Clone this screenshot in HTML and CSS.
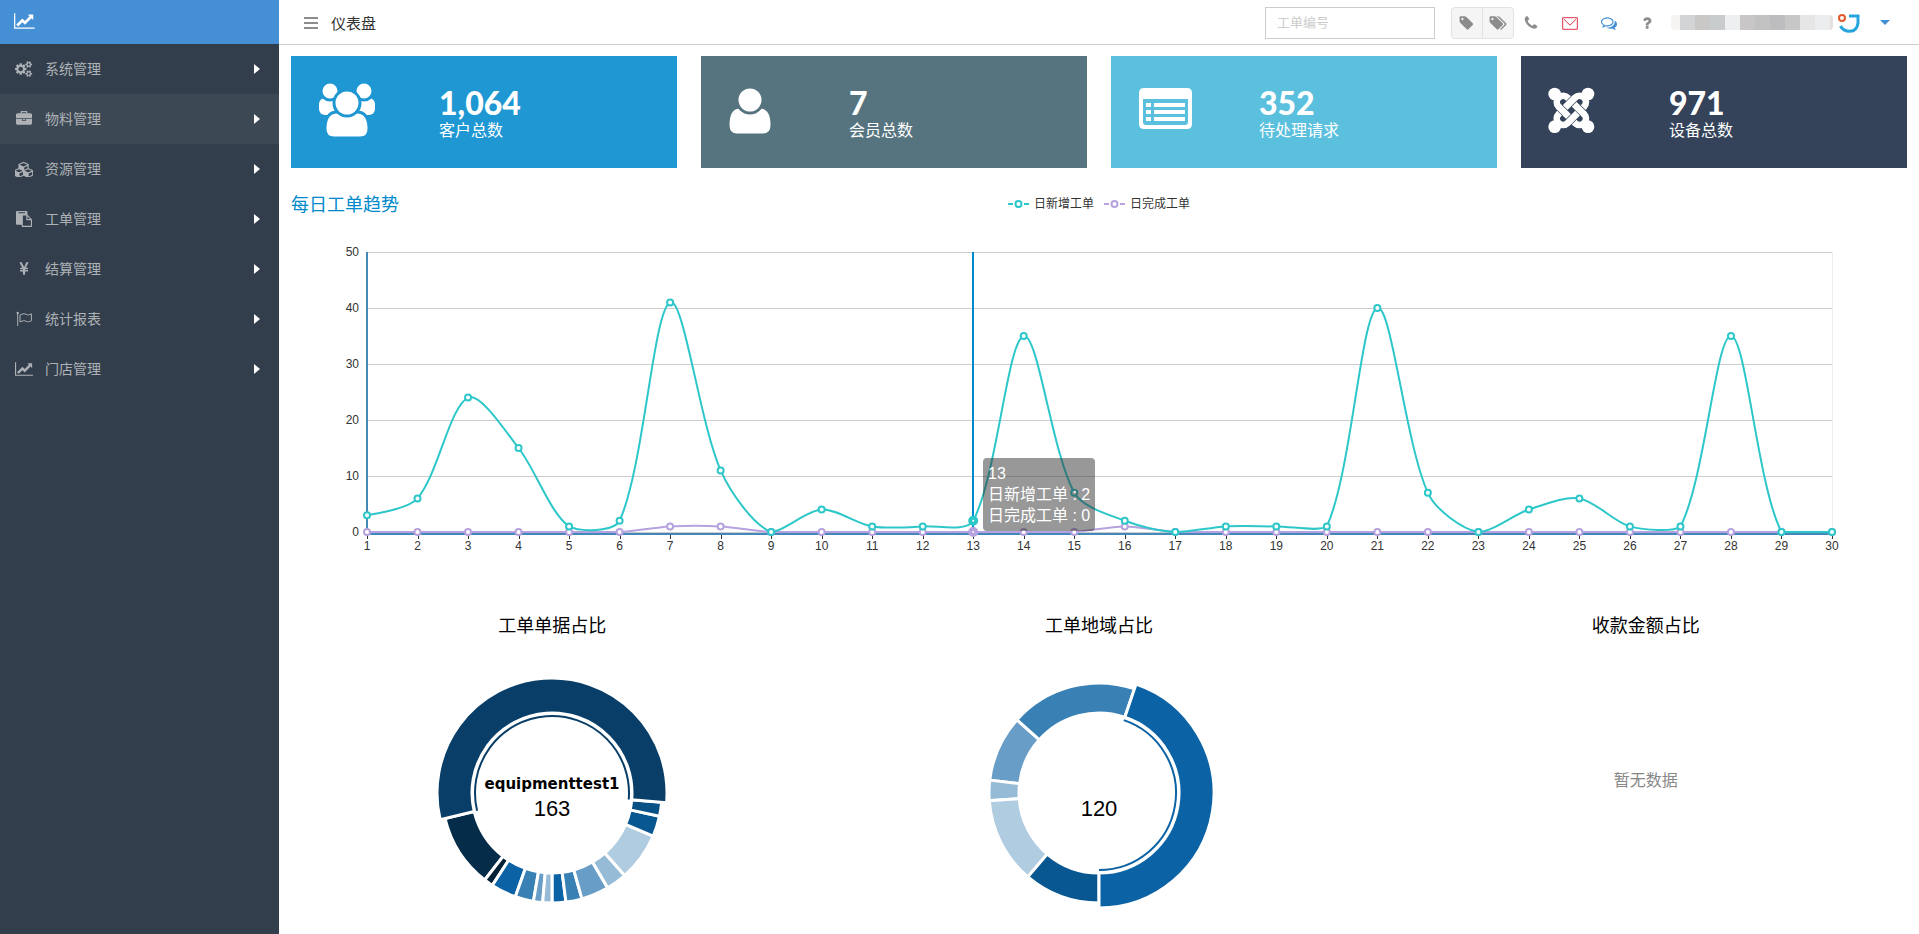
FILE: index.html
```html
<!DOCTYPE html>
<html lang="zh-CN">
<head>
<meta charset="utf-8">
<title>仪表盘</title>
<link rel="stylesheet" href="styles.css">
</head>
<body>
<div class="layout">
  <aside class="sidebar">
    <a class="brand" href="#" aria-label="首页"><svg class="brand-icon" viewBox="0 0 2048 1792"><path d="M2048 1536v128h-2048v-1536h128v1408h1920zM1920 288v435q0 21-19.500 29.500t-35.500-7.500l-121-121-633 633q-10 10-23 10t-23-10l-233-233-416 416-192-192 585-585q10-10 23-10t23 10l233 233 464-464-121-121q-16-16-7.500-35.500t29.500-19.500h435q14 0 23 9t9 23z"/></svg></a>
    <nav class="menu">
      <a class="menu-item" href="#"><span class="menu-icon"><svg viewBox="0 0 1920 1792"><path d="M896 896q0-106-75-181t-181-75-181 75-75 181 75 181 181 75 181-75 75-181zm768 512q0-52-38-90t-90-38-90 38-38 90q0 53 37.500 90.500t90.500 37.500 90.500-37.500 37.500-90.500zm0-1024q0-52-38-90t-90-38-90 38-38 90q0 53 37.500 90.500t90.500 37.500 90.500-37.500 37.500-90.500zm-384 421v185q0 10-7 19.500t-16 10.500l-155 24q-11 35-32 76 34 48 90 115 7 11 7 20 0 12-7 19-23 30-82.500 89.500t-78.500 59.500q-11 0-21-7l-115-90q-37 19-77 31-11 108-23 155-7 24-30 24h-186q-11 0-20-7.500t-10-17.500l-23-153q-34-10-75-31l-118 89q-7 7-20 7-11 0-21-8-144-133-144-160 0-9 7-19 10-14 41-53t47-61q-23-44-35-82l-152-24q-10-1-17-9.500t-7-19.500v-185q0-10 7-19.500t16-10.500l155-24q11-35 32-76-34-48-90-115-7-11-7-20 0-12 7-20 22-30 82-89t79-59q11 0 21 7l115 90q34-18 77-32 11-108 23-154 7-24 30-24h186q11 0 20 7.500t10 17.500l23 153q34 10 75 31l118-89q8-7 20-7 11 0 21 8 144 133 144 160 0 8-7 19-12 16-42 54t-45 60q23 48 34 82l152 23q10 2 17 10.500t7 19.500zm640 533v140q0 16-149 31-12 27-30 52 51 113 51 138 0 4-4 7-122 71-124 71-8 0-46-47t-52-68q-20 2-30 2t-30-2q-14 21-52 68t-46 47q-2 0-124-71-4-3-4-7 0-25 51-138-18-25-30-52-149-15-149-31v-140q0-16 149-31 13-29 30-52-51-113-51-138 0-4 4-7 4-2 35-20t59-34 30-16q8 0 46 46.500t52 67.500q20-2 30-2t30 2q51-71 92-112l6-2q4 0 124 70 4 3 4 7 0 25-51 138 17 23 30 52 149 15 149 31zm0-1024v140q0 16-149 31-12 27-30 52 51 113 51 138 0 4-4 7-122 71-124 71-8 0-46-47t-52-68q-20 2-30 2t-30-2q-14 21-52 68t-46 47q-2 0-124-71-4-3-4-7 0-25 51-138-18-25-30-52-149-15-149-31v-140q0-16 149-31 13-29 30-52-51-113-51-138 0-4 4-7 4-2 35-20t59-34 30-16q8 0 46 46.500t52 67.500q20-2 30-2t30 2q51-71 92-112l6-2q4 0 124 70 4 3 4 7 0 25-51 138 17 23 30 52 149 15 149 31z"/></svg></span><span class="menu-label">系统管理</span><span class="menu-arrow"></span></a>
      <a class="menu-item menu-item-active" href="#"><span class="menu-icon"><svg viewBox="0 0 1792 1792"><path d="M640 256h512v-128h-512v128zm1152 640v480q0 66-47 113t-113 47h-1472q-66 0-113-47t-47-113v-480h672v160q0 26 19 45t45 19h320q26 0 45-19t19-45v-160h672zm-768 0v128h-256v-128h256zm768-480v384h-1792v-384q0-66 47-113t113-47h352v-160q0-40 28-68t68-28h576q40 0 68 28t28 68v160h352q66 0 113 47t47 113z"/></svg></span><span class="menu-label">物料管理</span><span class="menu-arrow"></span></a>
      <a class="menu-item" href="#"><span class="menu-icon"><svg viewBox="0 0 2112 1792"><path d="M512 1728l384-192v-314l-384 164v342zm-64-454l404-173-404-173-404 173zm1088 454l384-192v-314l-384 164v342zm-64-454l404-173-404-173-404 173zm-448-293l384-165v-266l-384 164v267zm-64-379l441-189-441-189-441 189zm1088 518v416q0 36-19 67t-52 47l-448 224q-25 14-57 14t-57-14l-448-224q-4-2-7-4-2 2-7 4l-448 224q-25 14-57 14t-57-14l-448-224q-33-16-52-47t-19-67v-416q0-38 21.500-70t56.500-48l434-186v-400q0-38 21.500-70t56.500-48l448-192q23-10 50-10t50 10l448 192q35 16 56.500 48t21.500 70v400l434 186q36 16 57 48t21 70z"/></svg></span><span class="menu-label">资源管理</span><span class="menu-arrow"></span></a>
      <a class="menu-item" href="#"><span class="menu-icon"><svg viewBox="0 0 1792 1792"><path d="M768 1664h896v-640h-416q-40 0-68-28t-28-68v-416h-384v1152zm256-1440v-64q0-13-9.500-22.500t-22.500-9.500h-704q-13 0-22.500 9.500t-9.500 22.500v64q0 13 9.500 22.500t22.500 9.500h704q13 0 22.500-9.500t9.500-22.500zm256 672h299l-299-299v299zm512 128v672q0 40-28 68t-68 28h-960q-40 0-68-28t-28-68v-160h-544q-40 0-68-28t-28-68v-1344q0-40 28-68t68-28h1088q40 0 68 28t28 68v328q21 13 36 28l408 408q28 28 48 76t20 88z"/></svg></span><span class="menu-label">工单管理</span><span class="menu-arrow"></span></a>
      <a class="menu-item" href="#"><span class="menu-icon"><svg viewBox="0 0 1792 1792"><path d="M985.500 1536h-172q-13 0-22.500-9t-9.500-23v-330h-288q-13 0-22.500-9t-9.500-23v-103q0-13 9.500-22.500t22.500-9.500h288v-85h-288q-13 0-22.500-9t-9.500-23v-104q0-13 9.500-22.500t22.500-9.500h214l-321-578q-8-16 0-32 10-16 28-16h194q19 0 29 18l215 425q19 38 56 125 10-24 30.500-68t27.500-61l191-420q8-19 29-19h191q17 0 27 16 9 14 1 31l-313 579h215q13 0 22.500 9.500t9.500 22.500v104q0 14-9.500 23t-22.500 9h-290v85h290q13 0 22.500 9.500t9.500 22.500v103q0 14-9.500 23t-22.500 9h-290v330q0 13-9.500 22.500t-22.500 9.500z"/></svg></span><span class="menu-label">结算管理</span><span class="menu-arrow"></span></a>
      <a class="menu-item" href="#"><span class="menu-icon"><svg viewBox="0 0 16 16"><circle cx="1.700" cy="2" r="1.200"/><path d="M1.200 2h1v13h-1z"/><path class="flag-cloth" d="M4 4.100c3-1.700 4.500-1.600 6.200-.7 1.600.8 3 .6 5.200-.6v6.900c-2.200 1.200-3.600 1.400-5.200.6C8.500 9.500 7 9.400 4 11z"/></svg></span><span class="menu-label">统计报表</span><span class="menu-arrow"></span></a>
      <a class="menu-item" href="#"><span class="menu-icon"><svg viewBox="0 0 2048 1792"><path d="M2048 1536v128h-2048v-1536h128v1408h1920zM1920 288v435q0 21-19.500 29.500t-35.500-7.500l-121-121-633 633q-10 10-23 10t-23-10l-233-233-416 416-192-192 585-585q10-10 23-10t23 10l233 233 464-464-121-121q-16-16-7.500-35.500t29.500-19.500h435q14 0 23 9t9 23z"/></svg></span><span class="menu-label">门店管理</span><span class="menu-arrow"></span></a>
    </nav>
  </aside>

  <div class="page">
    <header class="topbar">
      <button class="toggle" type="button" aria-label="切换菜单"><svg viewBox="0 0 14 12"><path d="M0 0h14v2H0zM0 5h14v2H0zM0 10h14v2H0z"/></svg></button>
      <h1 class="page-title">仪表盘</h1>
      <input class="search" type="text" placeholder="工单编号" aria-label="工单编号">
      <div class="tag-group">
        <button type="button" aria-label="标签"><svg viewBox="64 0 1792 1792"><path d="M576 448q0-53-37.500-90.500t-90.500-37.500-90.500 37.500-37.500 90.500 37.500 90.500 90.500 37.500 90.500-37.500 37.500-90.500zm1067 576q0 53-37 90l-491 492q-39 37-91 37-53 0-90-37l-715-716q-38-37-64.500-101t-26.500-117v-416q0-52 38-90t90-38h416q53 0 117 26.500t102 64.500l715 714q37 39 37 91z"/></svg></button>
        <button type="button" aria-label="全部标签"><svg viewBox="64 0 2048 1792"><path d="M576 448q0-53-37.500-90.500t-90.500-37.500-90.500 37.500-37.500 90.500 37.500 90.500 90.500 37.500 90.500-37.500 37.500-90.500zm1067 576q0 53-37 90l-491 492q-39 37-91 37-53 0-90-37l-715-716q-38-37-64.500-101t-26.500-117v-416q0-52 38-90t90-38h416q53 0 117 26.500t102 64.500l715 714q37 39 37 91zm384 0q0 53-37 90l-491 492q-39 37-91 37-36 0-59-14t-53-45l470-470q37-37 37-90 0-52-37-91l-715-714q-38-38-102-64.500t-117-26.500h224q53 0 117 26.500t102 64.500l715 714q37 39 37 91z"/></svg></button>
      </div>
      <div class="actions">
        <button type="button" aria-label="电话"><svg viewBox="0 0 1792 1792"><path d="M1600 1240q0 27-10 70.500t-21 68.500q-21 50-122 106-94 51-186 51-27 0-52.500-3.500t-57.500-12.500-47.500-14.500-55.500-20.500-49-18q-98-35-175-83-128-79-264.500-215.500t-215.500-264.500q-48-77-83-175-3-9-18-49t-20.500-55.500-14.500-47.500-12.500-57.500-3.500-52.500q0-92 51-186 56-101 106-122 25-11 68.500-21t70.500-10q14 0 21 3 18 6 53 76 11 19 30 54t35 63.500 31 53.500q3 4 17.500 25t21.500 35.500 7 28.500q0 20-28.500 50t-62 55-62 53-28.500 46q0 9 5 22.500t8.500 20.500 14 24 11.500 19q76 137 174 235t235 174q2 1 19 11.500t24 14 20.500 8.500 22.500 5q18 0 46-28.500t53-62 55-62 50-28.500q14 0 28.500 7t35.500 21.500 25 17.500q25 15 53.500 31t63.500 35 54 30q70 35 76 53 3 7 3 21z"/></svg></button>
        <button class="mail" type="button" aria-label="邮件"><svg viewBox="0 0 16 16"><path d="M.7 2.700h14.600v11.600H.7zM2 4.300l6 5.900 6-5.900"/></svg></button>
        <button class="chat" type="button" aria-label="消息"><svg viewBox="0 0 1792 1792"><path d="M704 384q-153 0-286 52t-211.500 141-78.500 191q0 82 53 158t149 132l97 56-35 84q34-20 62-39l44-31 53 10q78 14 153 14 153 0 286-52t211.500-141 78.500-191-78.500-191-211.500-141-286-52zm0-128q191 0 353.500 68.500t256.500 186.500 94 257-94 257-256.500 186.500-353.500 68.500q-86 0-176-16-124 88-278 128-36 9-86 16h-3q-11 0-20.500-8t-11.500-21q-1-3-1-6.500t.5-6.500 2-6l2.500-5 3.500-5.500 4-5 4.500-5 4-4.500q5-6 23-25t26-29.500 22.500-29 25-38.500 20.500-44q-124-72-195-177t-71-224q0-139 94-257t256.500-186.500 353.500-68.500zm822 1169q10 24 20.500 44t25 38.500 22.500 29 26 29.500 23 25q1 1 4 4.500t4.500 5 4 5 3.500 5.500l2.500 5 2 6 .5 6.500-1 6.500q-3 14-13 22t-22 7q-50-7-86-16-154-40-278-128-90 16-176 16-271 0-472-132 58 4 88 4 161 0 309-45t264-129q125-92 192-212t67-254q0-77-23-152 129 71 204 178t75 230q0 120-71 224.500t-195 176.500z"/></svg></button>
        <button type="button" aria-label="帮助"><svg viewBox="128 0 1792 1792"><path d="M1088 1256v240q0 16-12 28t-28 12h-240q-16 0-28-12t-12-28v-240q0-16 12-28t28-12h240q16 0 28 12t12 28zm316-600q0 54-15.500 101t-35 76.500-55 59.500-57.500 43.500-61 35.500q-41 23-68.500 65t-27.500 67q0 17-12 32.500t-28 15.500h-240q-15 0-25.500-18.500t-10.500-37.500v-45q0-83 65-156.500t143-108.500q59-27 84-56t25-76q0-42-46.500-74t-107.500-32q-65 0-108 29-35 25-107 115-13 16-31 16-12 0-25-8l-164-125q-13-10-15.500-25t5.500-28q160-266 464-266 80 0 161 31t146 83 106 127.500 41 158.500z"/></svg></button>
      </div>
      <button class="user" type="button" aria-label="用户菜单">
        <span class="user-name"></span>
        <svg class="user-logo" viewBox="0 0 22 20"><circle cx="4" cy="5" r="3" stroke="#e2592a"/><path d="M11 3h9v7q-1 8-8 8.300-7 0-9.500-5.300" stroke="#26a4de" stroke-width="3"/></svg>
        <span class="caret"></span>
      </button>
    </header>

    <main class="content">
      <section class="cards">
        <a class="card card-blue" href="#">
          <svg class="card-icon" viewBox="0 0 60 60"><rect x="1" y="18" width="23" height="17" rx="6"/><rect x="34" y="18" width="23" height="17" rx="6"/><g class="outlined"><circle cx="12" cy="11" r="9"/><circle cx="46" cy="11" r="9"/><path d="M18 32q-11 1-11 17 0 9 9 9h26q9 0 9-9 0-16-11-17z"/><circle cx="29" cy="23" r="13"/></g></svg>
          <span class="card-text"><strong>1,064</strong><span>客户总数</span></span>
        </a>
        <a class="card card-slate" href="#">
          <svg class="card-icon" viewBox="-1 0 60 60"><g class="outlined"><path d="M10 27q-11 1-11 18 0 10 9 10h26q9 0 9-10 0-17-11-18z"/><circle cx="21" cy="20" r="13"/></g></svg>
          <span class="card-text"><strong>7</strong><span>会员总数</span></span>
        </a>
        <a class="card card-sky" href="#">
          <svg class="card-icon" viewBox="-1 0 60 60"><path fill-rule="evenodd" d="M5 8h43q5 0 5 5v31q0 5-5 5H5q-5 0-5-5V13q0-5 5-5zM4 19v23q0 3 3 3h39q3 0 3-3V19z"/><path d="M7 23h5v4H7zM15 23h31v4H15zM7 30h5v4H7zM15 30h31v4H15zM7 37h5v4H7zM15 37h31v4H15z"/></svg>
          <span class="card-text"><strong>352</strong><span>待处理请求</span></span>
        </a>
        <a class="card card-navy" href="#">
          <svg class="card-icon" viewBox="24 6 180 180">
            <circle cx="44" cy="48" r="19"/><circle cx="144" cy="48" r="19"/><circle cx="44" cy="146" r="19"/><circle cx="144" cy="146" r="19"/>
            <g class="knot" transform="translate(94 97) rotate(45)">
              <rect class="band" x="-54" y="-19" width="108" height="38" rx="19"/>
              <path class="casing" d="M-19-33V33M19-33V33"/>
              <rect class="band" x="-19" y="-54" width="38" height="108" rx="19"/>
              <path class="casing" d="M5-19h28M-33 19h28"/>
              <path class="band" d="M3-19h32M-35 19h32"/>
            </g>
          </svg>
          <span class="card-text"><strong>971</strong><span>设备总数</span></span>
        </a>
      </section>

      <section class="trend">
        <div class="trend-head">
          <h2 class="trend-title">每日工单趋势</h2>
          <div class="legend">
            <button class="legend-item legend-new" type="button"><svg viewBox="0 0 21 10"><path d="M0 5h5M16 5h5"/><circle cx="10.500" cy="5" r="3"/></svg>日新增工单</button>
            <button class="legend-item legend-done" type="button"><svg viewBox="0 0 21 10"><path d="M0 5h5M16 5h5"/><circle cx="10.500" cy="5" r="3"/></svg>日完成工单</button>
          </div>
        </div>
        <div class="trend-plot">
          <svg id="trend" class="trend-svg" role="img" aria-label="每日工单趋势"></svg>
          <div id="tip" class="tooltip">13<br>日新增工单 : 2<br>日完成工单 : 0</div>
        </div>
      </section>

      <section class="donuts">
        <div class="donut-col"><h3>工单单据占比</h3><svg id="donut-type" class="donut" viewBox="-120 -120 240 240"></svg></div>
        <div class="donut-col"><h3>工单地域占比</h3><svg id="donut-area" class="donut" viewBox="-120 -120 240 240"></svg></div>
        <div class="donut-col"><h3>收款金额占比</h3><p class="empty">暂无数据</p></div>
      </section>
    </main>
  </div>
</div>
<script src="charts.js"></script>
</body>
</html>
```

FILE: styles.css
```css
* { box-sizing: border-box; }

body {
  margin: 0;
  background: #fff;
  color: #333;
  font-family: "Liberation Sans", "Noto Sans CJK SC", sans-serif;
  font-size: 14px;
}

button {
  margin: 0;
  padding: 0;
  border: 0;
  background: none;
  font: inherit;
  color: inherit;
  cursor: pointer;
}

a { color: inherit; text-decoration: none; }
h1, h2, h3, p { margin: 0; font-weight: 400; }
svg { display: block; fill: currentColor; }

.layout { display: flex; min-height: 100vh; }

/* sidebar */
.sidebar { flex: none; width: 279px; background: #323e4b; color: #aeb2b7; }
.brand {
  display: flex;
  align-items: center;
  height: 44px;
  padding: 0 14px 2px;
  background: #4590d5;
  color: #fff;
}
.brand-icon { height: 18px; }
.menu-item {
  display: flex;
  align-items: center;
  height: 50px;
  padding: 0 19px 0 14px;
  line-height: 20px;
}
.menu-item-active { background: #3d4855; }
.menu-icon { display: flex; justify-content: center; width: 20px; margin-right: 11px; }
.menu-icon svg { height: 16px; }
.flag-cloth { fill: none; stroke: currentColor; }
.menu-label { flex: 1; }
.menu-arrow { border: 5px solid transparent; border-left: 6px solid #fff; border-right: 0; }

/* top bar */
.page { flex: 1; min-width: 0; }
.topbar {
  display: flex;
  align-items: center;
  height: 45px;
  padding: 1px 29px 0 25px;
  border-bottom: 1px solid #ccc;
}
.toggle { color: #8c8c8c; }
.toggle svg { width: 14px; }
.page-title { flex: 1; margin-left: 13px; font-size: 15px; }
.search {
  width: 170px;
  height: 32px;
  margin-right: 16px;
  padding: 0 11px;
  border: 1px solid #ccc;
  font: inherit;
  font-size: 13px;
}
.search::placeholder { color: #ccc; }
.tag-group {
  display: flex;
  height: 32px;
  border: 1px solid #e2e2e2;
  border-radius: 4px;
  background: #f5f5f5;
  color: #8c8c8c;
}
.tag-group button { display: flex; align-items: center; justify-content: center; width: 30px; }
.tag-group button + button { width: 31px; border-left: 1px solid #e2e2e2; }
.tag-group svg { height: 16px; }
.actions { display: flex; gap: 5px; color: #8c8c8c; }
.actions button { display: flex; justify-content: center; width: 34px; }
.actions svg { height: 16px; }
.actions .mail { color: #e0334c; }
.mail svg { fill: none; stroke: currentColor; }
.actions .chat { color: #4590d5; }
.user { display: flex; align-items: center; margin-left: 6px; }
.user-name {
  width: 162px;
  height: 15px;
  margin-right: 5px;
  border-radius: 4px;
  background: linear-gradient(90deg, #f5f4f3 9px, #d3d4d6 9px 24px, #c9c8c6 24px 39px, #c8cccc 39px 54px, #edeff1 54px 69px, #c9c6c7 69px 84px, #c2c2c2 84px 99px, #bdbdbf 99px 114px, #c7c7c7 114px 129px, #e6e6e6 129px 144px, #ecedef 144px 159px, #e6e1e1 159px);
}
.user-logo { width: 22px; margin-right: 20px; fill: none; stroke-width: 2; }
.caret { border: 5px solid transparent; border-top-color: #4590d5; border-bottom: 0; }

/* content */
.content { padding: 11px 12px; }

.cards { display: grid; grid-template-columns: repeat(4, 1fr); gap: 24px; }
.card { display: flex; height: 112px; padding: 24px 27px; color: #fff; }
.card-icon { flex: none; width: 60px; height: 60px; overflow: visible; }
.outlined { stroke-width: 3; }
.card-blue { background: #1f97d2; }
.card-blue .outlined { stroke: #1f97d2; }
.card-slate { background: #56747f; }
.card-slate .outlined { stroke: #56747f; }
.card-sky { background: #5bc0de; }
.card-navy { background: #34435a; }
.knot { fill: none; }
.band { stroke: #fff; stroke-width: 20; }
.casing { stroke: #34435a; stroke-width: 24; }
.card-text { display: flex; flex-direction: column; margin: 6px 0 0 61px; font-size: 16px; line-height: 22px; }
.card-text strong { font-family: Lato, sans-serif; font-size: 32px; font-weight: 900; line-height: 34px; }

.trend { margin-top: 25px; }
.trend-head { display: grid; grid-template-columns: 1fr auto 1fr; align-items: center; height: 24px; }
.trend-title { color: #008acd; font-size: 18px; line-height: 24px; }
.legend { display: flex; gap: 10px; padding-bottom: 2px; }
.legend-item { display: flex; align-items: center; gap: 5px; font-size: 12px; line-height: 16px; }
.legend svg { width: 21px; fill: none; stroke-width: 2; }
.legend-new svg { stroke: #2ec7c9; }
.legend-done svg { stroke: #b6a2de; }

.trend-plot { position: relative; }
.trend-svg { width: 100%; height: 360px; overflow: visible; }
.trend-svg text { fill: #333; font-size: 12px; }
.grid-line { stroke: #ccc; }
.edge-line { stroke: #eee; }
.axis { fill: none; stroke: #4488bb; stroke-width: 2; }
.tick { stroke: #333; }
.pointer { stroke: #008acd; stroke-width: 2; }
.series { fill: none; stroke-width: 2; }
.dot { fill: #fff; stroke-width: 2; }
.dot-active { fill: #fff; stroke-width: 4; }
.series-new { stroke: #2ec7c9; }
.series-done { stroke: #b6a2de; }

.tooltip {
  position: absolute;
  padding: 5px;
  border-radius: 4px;
  background: rgba(50, 50, 50, .5);
  color: #fff;
  font-size: 16px;
  line-height: 21px;
  white-space: nowrap;
}

.donuts { display: grid; grid-template-columns: repeat(3, 1fr); gap: 24px; margin-top: 36px; color: #000; text-align: center; }
.donut-col h3 { font-size: 18px; line-height: 26px; }
.donut { width: 240px; height: 240px; margin: 34px auto 0; }
.slice { stroke: #fff; stroke-width: 3; }
.ring { fill: none; stroke-width: 2; }
.donut text { fill: #000; text-anchor: middle; }
.donut-label { font-family: "DejaVu Sans", sans-serif; font-size: 15px; font-weight: 700; }
.donut-value { font-size: 22px; }
.empty { margin-top: 130px; color: #888; font-size: 16px; line-height: 24px; }
```

FILE: charts.js
```js
const NS = 'http://www.w3.org/2000/svg';

function add(parent, name, attrs, text) {
  const el = document.createElementNS(NS, name);
  for (const key in attrs) el.setAttribute(key, attrs[key]);
  if (text !== undefined) el.textContent = text;
  parent.appendChild(el);
  return el;
}

/* ---- daily trend ---- */
const created = [3, 6, 24, 15, 1, 2, 41, 11, 0, 4, 1, 1, 2, 35, 7, 2, 0, 1, 1, 1, 40, 7, 0, 4, 6, 1, 1, 35, 0, 0];
const finished = created.map((_, i) => ([6, 7, 15].includes(i) ? 1 : 0));
const activeIndex = 12;
const plot = { left: 76, right: 75, top: 35, bottom: 315, max: 50 };

function smoothPath(pts) {
  const clamp = v => Math.min(plot.bottom, Math.max(plot.top, v));
  const controls = pts.map((p, i) => {
    const prev = pts[i - 1], next = pts[i + 1];
    if (!prev || !next) return [p, p];
    const d0 = Math.hypot(p[0] - prev[0], p[1] - prev[1]);
    const d1 = Math.hypot(p[0] - next[0], p[1] - next[1]);
    const vx = (next[0] - prev[0]) * 0.3 / (d0 + d1);
    const vy = (next[1] - prev[1]) * 0.3 / (d0 + d1);
    return [[p[0] - vx * d0, clamp(p[1] - vy * d0)], [p[0] + vx * d1, clamp(p[1] + vy * d1)]];
  });
  let d = 'M' + pts[0];
  for (let i = 1; i < pts.length; i++) d += 'C' + [controls[i - 1][1], controls[i][0], pts[i]].join(' ');
  return d;
}

function drawTrend() {
  const svg = document.getElementById('trend');
  svg.textContent = '';
  const x1 = svg.getBoundingClientRect().width - plot.right;
  const x = i => plot.left + (x1 - plot.left) * i / (created.length - 1);
  const y = v => plot.bottom - (plot.bottom - plot.top) * v / plot.max;

  for (let v = 0; v <= plot.max; v += 10) {
    add(svg, 'line', { class: 'grid-line', x1: plot.left, x2: x1, y1: y(v) + 0.5, y2: y(v) + 0.5 });
    add(svg, 'text', { x: plot.left - 8, y: y(v) + 4, 'text-anchor': 'end' }, v);
  }
  add(svg, 'line', { class: 'edge-line', x1: x1 + 0.5, x2: x1 + 0.5, y1: plot.top, y2: plot.bottom });
  created.forEach((_, i) => {
    const cx = Math.round(x(i)) + 0.5;
    add(svg, 'line', { class: 'tick', x1: cx, x2: cx, y1: plot.bottom + 3, y2: plot.bottom + 7 });
    add(svg, 'text', { x: x(i), y: plot.bottom + 18, 'text-anchor': 'middle' }, i + 1);
  });
  add(svg, 'path', { class: 'axis', d: `M${plot.left} ${plot.top}V${plot.bottom + 2}H${x1}` });
  const px = Math.round(x(activeIndex));
  add(svg, 'line', { class: 'pointer', x1: px, x2: px, y1: plot.top, y2: plot.bottom });

  [[finished, 'series-done'], [created, 'series-new']].forEach(([data, cls]) => {
    const pts = data.map((v, i) => [x(i), y(v)]);
    add(svg, 'path', { class: 'series ' + cls, d: smoothPath(pts) });
    pts.forEach((p, i) => {
      const active = i === activeIndex;
      add(svg, 'circle', { class: (active ? 'dot-active ' : 'dot ') + cls, cx: p[0], cy: p[1], r: 3 });
    });
  });

  const tip = document.getElementById('tip');
  tip.style.left = px + 10 + 'px';
  tip.style.top = plot.bottom - tip.offsetHeight - 1 + 'px';
}

/* ---- donuts ---- */
const palette = ['#0b62a4', '#3980b5', '#679dc6', '#95bbd7', '#b0cce1', '#095791', '#095085', '#083e67', '#052c48', '#042135'];

function point(r, a) { return [r * Math.sin(a), -r * Math.cos(a)]; }

function drawDonut(id, values, active, label) {
  const svg = document.getElementById(id);
  const total = values.reduce((a, b) => a + b);
  const inner = 80, outer = 110;
  let a = Math.PI, drawActive;
  values.forEach((v, i) => {
    const start = a;
    const end = a - v / total * 2 * Math.PI;
    const large = start - end > Math.PI ? 1 : 0;
    const color = palette[i % palette.length];
    const R = i === active ? outer + 5 : outer;
    const draw = () => add(svg, 'path', {
      class: 'slice', fill: color,
      d: `M${point(R, start)}A${R} ${R} 0 ${large} 0 ${point(R, end)}L${point(inner, end)}A${inner} ${inner} 0 ${large} 1 ${point(inner, start)}Z`
    });
    if (i === active) {
      drawActive = () => {
        draw();
        add(svg, 'path', { class: 'ring', stroke: color, d: `M${point(77, start)}A77 77 0 ${large} 0 ${point(77, end)}` });
      };
    } else draw();
    a = end;
  });
  drawActive();
  if (label) add(svg, 'text', { class: 'donut-label', x: 0, y: -4 }, label);
  add(svg, 'text', { class: 'donut-value', x: 0, y: 23 }, values[active]);
}

drawTrend();
window.addEventListener('resize', drawTrend);
drawDonut('donut-type', [6, 7, 12, 9, 21, 9, 6, 163, 32, 4, 11, 8, 4, 4], 7, 'equipmenttest1');
drawDonut('donut-area', [120, 50, 26, 8, 34, 30], 0);
```
